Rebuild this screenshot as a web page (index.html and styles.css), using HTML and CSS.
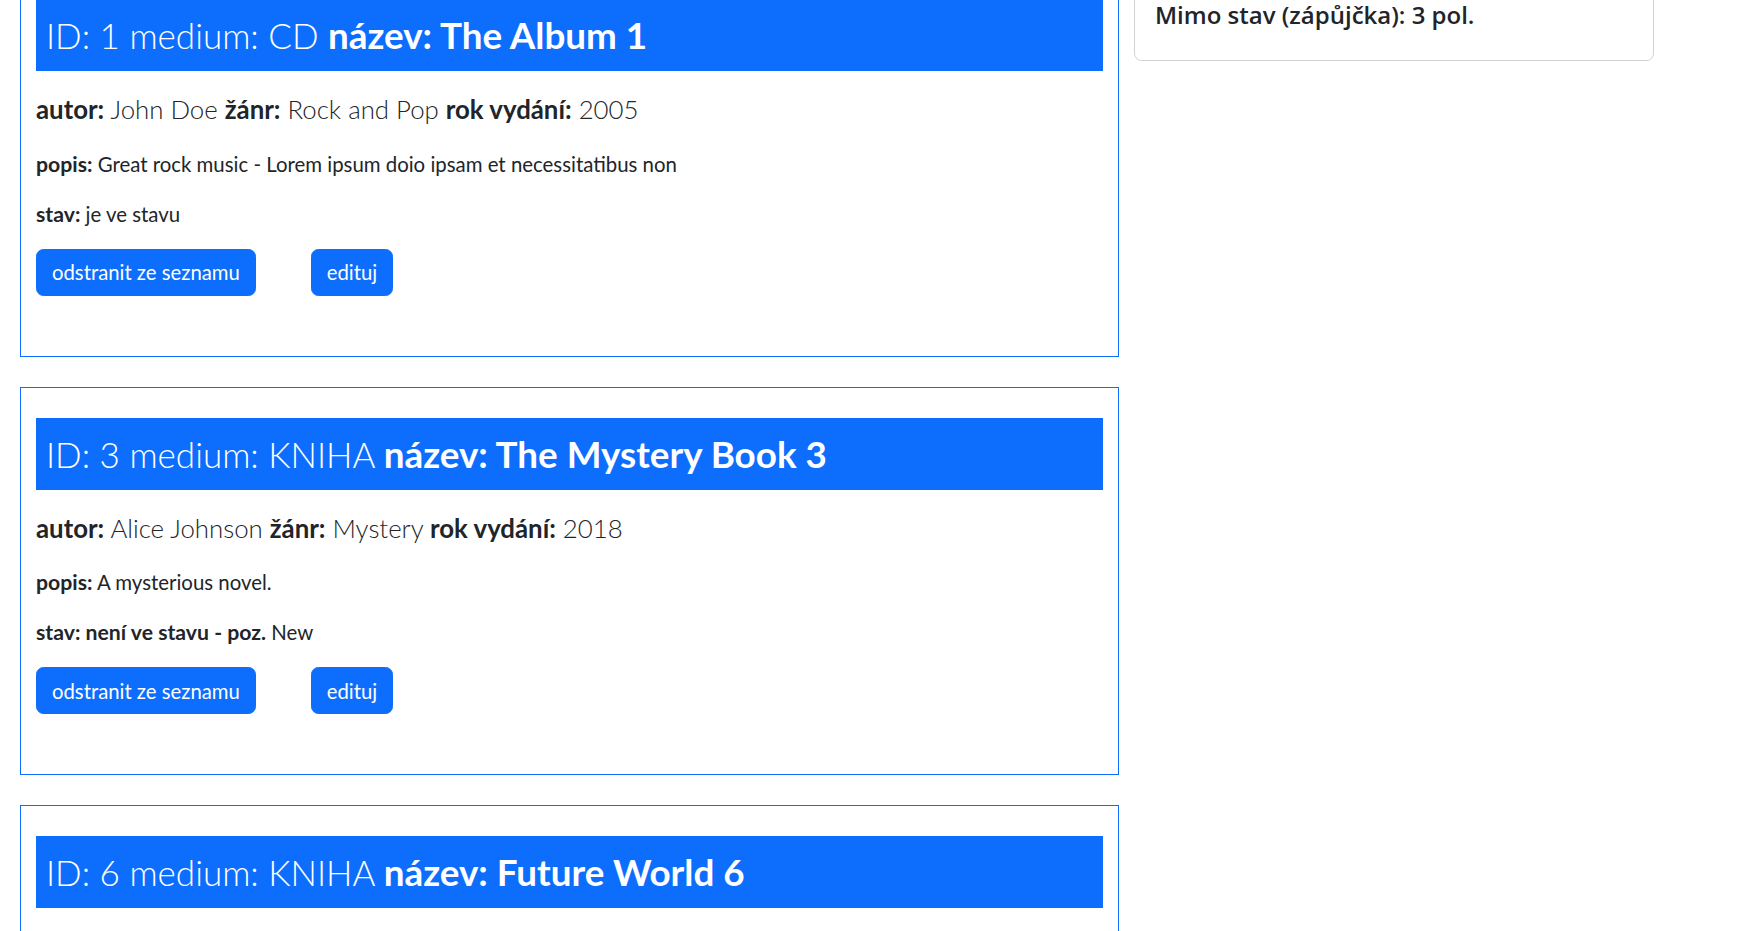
FILE: index.html
```html
<!DOCTYPE html>
<html lang="cs">
<head>
<meta charset="utf-8">
<title>Seznam položek</title>
<link rel="stylesheet" href="styles.css">
</head>
<body>
<div class="page">
  <main class="main">
    <h2 class="page-title">Seznam položek</h2>

    <article class="item">
      <h2 class="item-title">ID: 1 medium: CD <strong>název: The Album 1</strong></h2>
      <p class="lead"><strong>autor:</strong> John Doe <strong>žánr:</strong> Rock and Pop <strong>rok vydání:</strong> 2005</p>
      <p><strong>popis:</strong> Great rock music - Lorem ipsum doio ipsam et necessitatibus non</p>
      <p><strong>stav:</strong> je ve stavu</p>
      <div class="actions">
        <button class="btn" type="button">odstranit ze seznamu</button>
        <button class="btn" type="button">edituj</button>
      </div>
    </article>

    <article class="item">
      <h2 class="item-title">ID: 3 medium: KNIHA <strong>název: The Mystery Book 3</strong></h2>
      <p class="lead"><strong>autor:</strong> Alice Johnson <strong>žánr:</strong> Mystery <strong>rok vydání:</strong> 2018</p>
      <p><strong>popis:</strong> A mysterious novel.</p>
      <p><strong>stav: není ve stavu - poz.</strong> New</p>
      <div class="actions">
        <button class="btn" type="button">odstranit ze seznamu</button>
        <button class="btn" type="button">edituj</button>
      </div>
    </article>

    <article class="item">
      <h2 class="item-title">ID: 6 medium: KNIHA <strong>název: Future World 6</strong></h2>
      <p class="lead"><strong>autor:</strong> Robert Brown <strong>žánr:</strong> Sci-Fi <strong>rok vydání:</strong> 2020</p>
      <p><strong>popis:</strong> A journey into the future.</p>
      <p><strong>stav:</strong> je ve stavu</p>
      <div class="actions">
        <button class="btn" type="button">odstranit ze seznamu</button>
        <button class="btn" type="button">edituj</button>
      </div>
    </article>
  </main>

  <aside class="sidebar">
    <div class="stats-card">
      <h5 class="stats-title">Statistika</h5>
      <p class="stats">Celkem: 8 pol.<br>Ve stavu: 5 pol.<br>Mimo stav (zápůjčka): 3 pol.</p>
    </div>
  </aside>
</div>
</body>
</html>
```

FILE: styles.css
```css
html, body {
  margin: 0;
  padding: 0;
  background: #ffffff;
}

body {
  font-family: "Lato", "Open Sans", "DejaVu Sans", sans-serif;
  font-size: 20px;
  line-height: 1.5;
  color: #212529;
}

.page {
  display: flex;
  align-items: flex-start;
  gap: 15px;
  padding: 0 20px;
  margin-top: -121px;
}

.main {
  flex: none;
  width: 1099px;
}

.page-title {
  font-size: 40px;
  line-height: 48px;
  font-weight: 500;
  margin: 0 0 41px;
}

.item {
  border: 1px solid #0d6efd;
  padding: 30px 15px 60px;
  margin-top: 30px;
}

.item-title {
  background: #0d6efd;
  color: #ffffff;
  margin: 0 0 20px;
  padding: 12px 10px;
  font-size: 35px;
  line-height: 48px;
  font-weight: 300;
}

.item-title strong {
  font-weight: 700;
  font-size: 36.8px;
}

.item p {
  margin: 0 0 20px;
  font-size: 20.4px;
  line-height: 30px;
}

.item p strong {
  font-weight: 700;
  font-size: 1.04em;
}

.item p.lead {
  font-size: 25.8px;
  line-height: 37.5px;
  font-weight: 300;
}

.item p.lead strong {
  font-size: 1em;
}

.actions {
  display: flex;
  gap: 55px;
}

.btn {
  font-family: inherit;
  font-size: 20.3px;
  line-height: 30px;
  padding: 7.5px 15px;
  border: 1px solid #0d6efd;
  background: #0d6efd;
  color: #ffffff;
  border-radius: 7.5px;
  cursor: pointer;
}

.sidebar {
  flex: none;
  width: 520px;
}

.stats-card {
  border: 1px solid rgba(0, 0, 0, 0.175);
  border-radius: 7.5px;
  padding: 20px;
  font-family: "Open Sans", "Noto Sans", sans-serif;
}

.stats-title,
.stats {
  font-size: 24px;
  line-height: 30px;
  font-weight: 600;
  margin: 0 0 10px;
}
```
